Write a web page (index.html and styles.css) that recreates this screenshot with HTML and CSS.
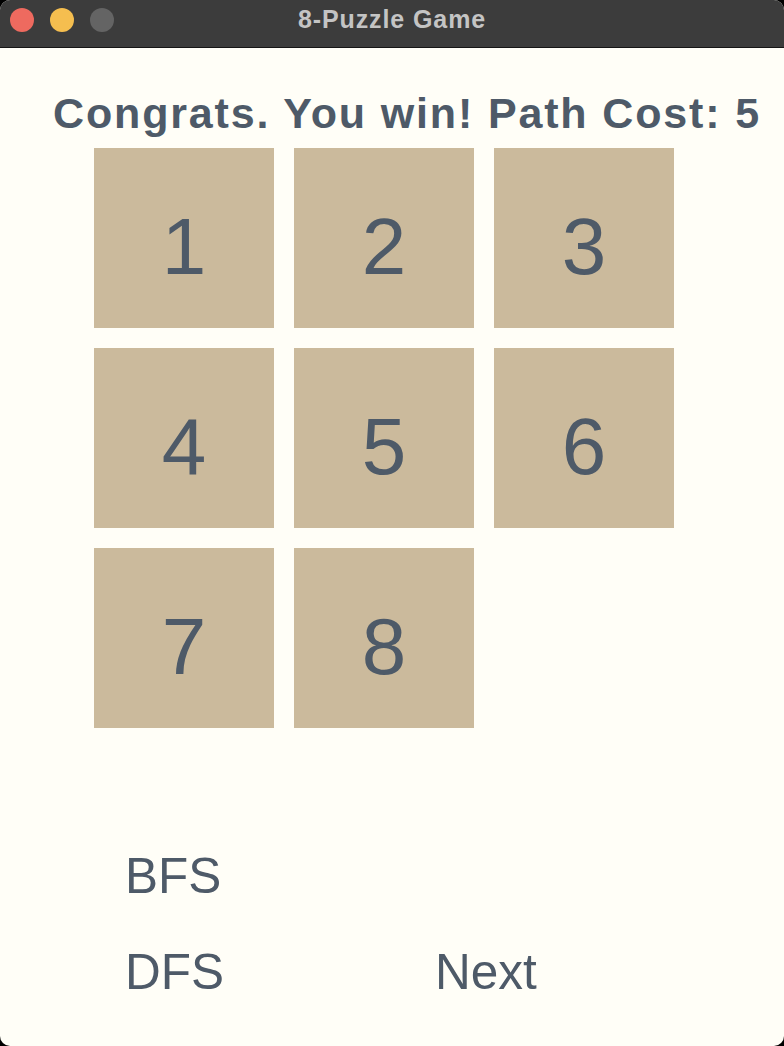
FILE: index.html
```html
<!DOCTYPE html>
<html>
<head>
<meta charset="utf-8">
<title>8-Puzzle Game</title>
<link rel="stylesheet" href="styles.css">
</head>
<body>
<div class="window">
  <header class="titlebar">
    <div class="lights">
      <span class="light red"></span>
      <span class="light yellow"></span>
      <span class="light gray"></span>
    </div>
    <div class="title">8-Puzzle Game</div>
    <div class="spacer"></div>
  </header>
  <main class="content">
    <h1 class="status">Congrats. You win! Path Cost: 5</h1>
    <div class="board">
      <div class="tile">1</div>
      <div class="tile">2</div>
      <div class="tile">3</div>
      <div class="tile">4</div>
      <div class="tile">5</div>
      <div class="tile">6</div>
      <div class="tile">7</div>
      <div class="tile">8</div>
      <div class="tile empty"></div>
    </div>
    <div class="controls">
      <button class="btn">BFS</button>
      <span></span>
      <button class="btn">DFS</button>
      <button class="btn">Next</button>
    </div>
  </main>
</div>
</body>
</html>
```
FILE: styles.css
```css
* { box-sizing: border-box; }
html, body {
  margin: 0;
  padding: 0;
  background: #000;
}
.window {
  width: 784px;
  height: 1046px;
  background: #fffef7;
  border-radius: 10px;
  overflow: hidden;
  display: flex;
  flex-direction: column;
}
.titlebar {
  height: 48px;
  background: #3c3c3c;
  border-bottom: 1px solid #151515;
  display: grid;
  grid-template-columns: 1fr auto 1fr;
  align-items: center;
  flex: none;
}
.lights {
  display: flex;
  gap: 16px;
  padding-left: 10px;
  padding-bottom: 7px;
}
.light {
  width: 24px;
  height: 24px;
  border-radius: 50%;
  display: block;
}
.red { background: #ee6a5f; }
.yellow { background: #f5be4f; }
.gray { background: #646464; }
.title {
  font-family: "Liberation Sans", Arial, sans-serif;
  font-weight: bold;
  font-size: 25px;
  letter-spacing: 0.9px;
  color: #c4c4c4;
  padding-bottom: 8px;
}
.content {
  flex: 1;
  font-family: "Liberation Sans", Arial, sans-serif;
  color: #4e5a68;
}
.status {
  margin: 42px 0 12px 0;
  padding-left: 53px;
  font-size: 43px;
  line-height: 46px;
  font-weight: bold;
  letter-spacing: 1.85px;
  white-space: nowrap;
}
.board {
  margin-left: 94px;
  display: grid;
  grid-template-columns: repeat(3, 180px);
  grid-auto-rows: 180px;
  gap: 20px;
}
.tile {
  background: #cbba9c;
  display: flex;
  align-items: center;
  justify-content: center;
  padding-top: 18px;
  font-size: 80px;
  line-height: normal;
}
.tile.empty { background: transparent; }
.controls {
  margin-top: 120px;
  padding-left: 125px;
  display: grid;
  grid-template-columns: 310px auto;
  row-gap: 40px;
  justify-items: start;
}
.btn {
  font-family: "Liberation Sans", Arial, sans-serif;
  font-size: 49.5px;
  line-height: 56px;
  color: #4e5a68;
  background: none;
  border: none;
  padding: 0;
  margin: 0;
}
```
